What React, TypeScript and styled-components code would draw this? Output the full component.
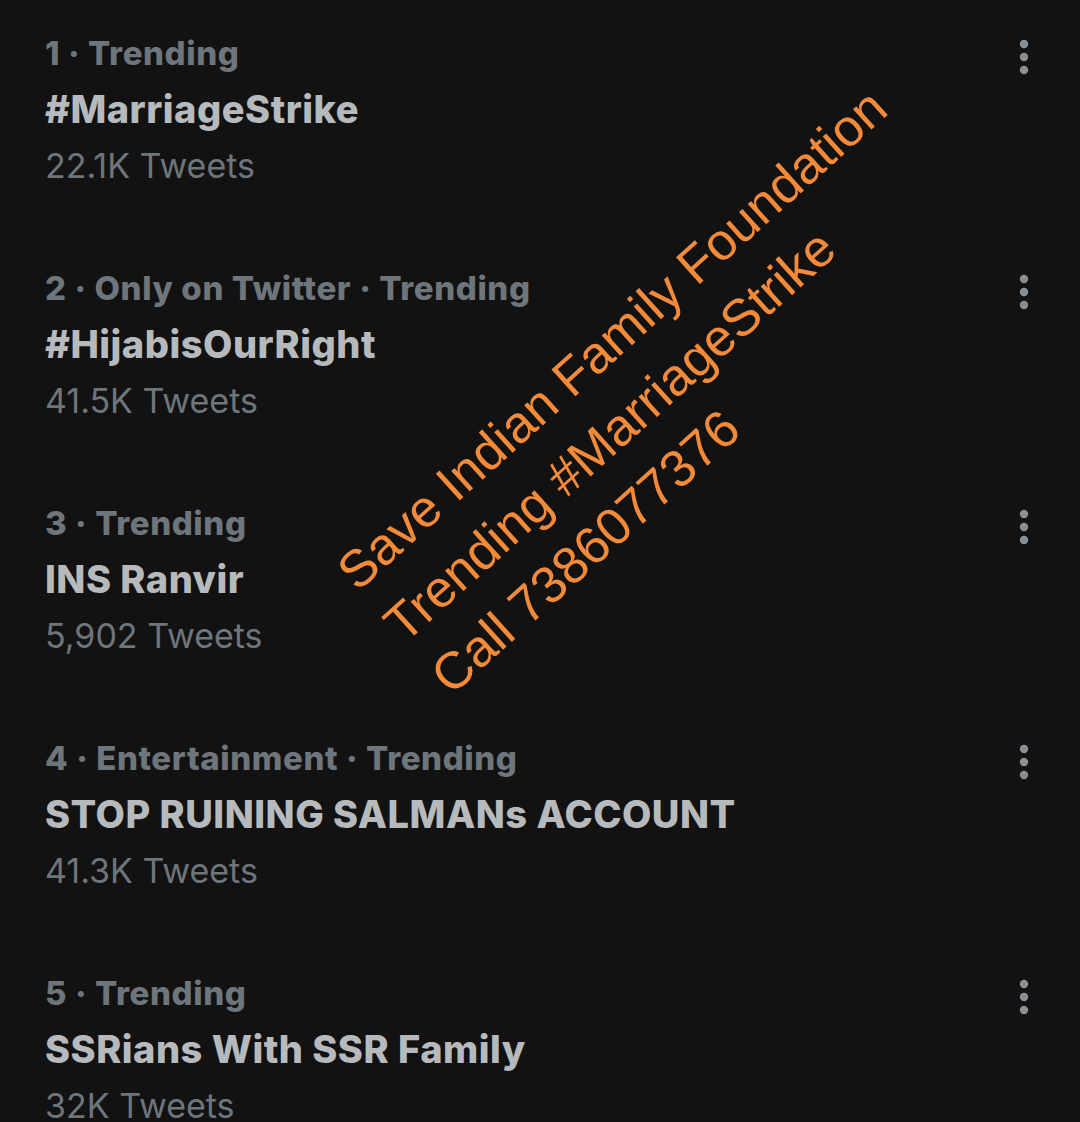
import React from 'react';
import styled, { createGlobalStyle } from 'styled-components';

const GlobalStyle = createGlobalStyle`
    html, body {
        margin: 0;
        padding: 0;
        background: #121212;
    }
    body {
        font-family: Inter, Roboto, "Noto Sans", sans-serif;
    }
`;

const Page = styled.div`
    position: relative;
    width: 1080px;
    height: 1122px;
    overflow: hidden;
    background: #121212;
`;

const List = styled.div`
    display: flex;
    flex-direction: column;
`;

const Row = styled.div`
    display: flex;
    justify-content: space-between;
    align-items: flex-start;
    height: 235px;
    padding: 25px 44px 0 45px;
    box-sizing: border-box;
`;

const Content = styled.div`
    display: flex;
    flex-direction: column;
`;

const Meta = styled.div`
    font-size: 33px;
    font-weight: 800;
    line-height: 56px;
    color: #6e757b;
    letter-spacing: 0.6px;
`;

const Title = styled.div`
    font-size: 38px;
    font-weight: 800;
    line-height: 56px;
    color: #b7babd;
    letter-spacing: 0.5px;
`;

const Count = styled.div`
    font-size: 34px;
    font-weight: 400;
    line-height: 57px;
    color: #6e757b;
`;

const MoreButton = styled.button`
    display: flex;
    align-items: center;
    justify-content: center;
    width: 24px;
    height: 40px;
    margin-top: 12px;
    padding: 0;
    border: none;
    background: transparent;
`;

const Stamp = styled.div`
    position: absolute;
    left: 322px;
    top: 553px;
    transform: rotate(-42deg);
    transform-origin: top left;
    font-family: "Liberation Sans", Arial, sans-serif;
    font-size: 52px;
    line-height: 70px;
    color: #f28a3a;
    white-space: nowrap;
    pointer-events: none;
`;

interface Trend {
    meta: string;
    title: string;
    count: string;
}

const trends: Trend[] = [
    { meta: '1 · Trending', title: '#MarriageStrike', count: '22.1K Tweets' },
    { meta: '2 · Only on Twitter · Trending', title: '#HijabisOurRight', count: '41.5K Tweets' },
    { meta: '3 · Trending', title: 'INS Ranvir', count: '5,902 Tweets' },
    { meta: '4 · Entertainment · Trending', title: 'STOP RUINING SALMANs ACCOUNT', count: '41.3K Tweets' },
    { meta: '5 · Trending', title: 'SSRians With SSR Family', count: '32K Tweets' },
];

const Dots = () => (
    <svg width="24" height="40" viewBox="0 0 24 40">
        <circle cx="12" cy="7" r="4.2" fill="#8a8f94" />
        <circle cx="12" cy="20" r="4.2" fill="#8a8f94" />
        <circle cx="12" cy="33" r="4.2" fill="#8a8f94" />
    </svg>
);

const App: React.FC = () => {
    return (
        <Page>
            <GlobalStyle />
            <List>
                {trends.map((t) => (
                    <Row key={t.title}>
                        <Content>
                            <Meta>{t.meta}</Meta>
                            <Title>{t.title}</Title>
                            <Count>{t.count}</Count>
                        </Content>
                        <MoreButton>
                            <Dots />
                        </MoreButton>
                    </Row>
                ))}
            </List>
            <Stamp>
                Save Indian Family Foundation
                <br />
                Trending #MarriageStrike
                <br />
                Call 7386077376
            </Stamp>
        </Page>
    );
};

export default App;
